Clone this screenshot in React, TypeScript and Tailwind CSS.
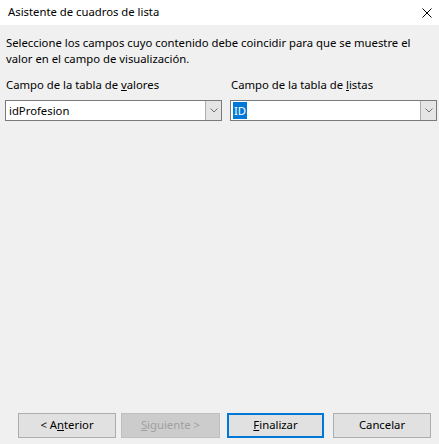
const font = "font-['Segoe_UI','Noto_Sans',sans-serif]";

function Combo({ value, selected, width }: { value: string; selected?: boolean; width: string }) {
  return (
    <div className={`flex h-[21px] ${width} border border-[#7a7a7a] bg-white`}>
      <div className="flex flex-1 items-center pl-[2px]">
        {selected ? (
          <span className="bg-[#0078d7] px-[1px] leading-[17px] text-white">{value}</span>
        ) : (
          <span className="pl-[1px] leading-[17px] text-black">{value}</span>
        )}
      </div>
      <div className="flex w-[16px] items-center justify-center border-l border-[#adadad] bg-[#e5e5e5]">
        <svg width="8" height="5" viewBox="0 0 8 5">
          <path d="M0.5 0.5 L4 4 L7.5 0.5" fill="none" stroke="#707070" strokeWidth="1" />
        </svg>
      </div>
    </div>
  );
}

function Btn({ children, disabled, focused, className = "" }: { children: React.ReactNode; disabled?: boolean; focused?: boolean; className?: string }) {
  const base = "flex h-[25px] items-center justify-center";
  if (disabled)
    return <div className={`${base} ${className} border border-[#bfbfbf] bg-[#cccccc] text-[#a0a0a0]`}>{children}</div>;
  if (focused)
    return <div className={`${base} ${className} border-2 border-[#0078d7] bg-[#e1e1e1] text-black`}>{children}</div>;
  return <div className={`${base} ${className} border border-[#adadad] bg-[#e1e1e1] text-black`}>{children}</div>;
}

export default function App() {
  return (
    <div className={`flex h-[444px] w-[439px] flex-col text-[11.3px] ${font}`}>
      <div className="flex h-[25px] items-center justify-between bg-white pl-[8px] pr-[6px]">
        <span className="text-black">Asistente de cuadros de lista</span>
        <svg width="10" height="10" viewBox="0 0 10 10" className="mr-[1px]">
          <path d="M0.5 0.5 L9.5 9.5 M9.5 0.5 L0.5 9.5" stroke="#000" strokeWidth="1" />
        </svg>
      </div>
      <div className="flex flex-1 flex-col bg-[#f0f0f0] pt-[10px]">
        <p className="pl-[6px] leading-[16px] text-black">
          Seleccione los campos cuyo contenido debe coincidir para que se muestre el
          <br />
          valor en el campo de visualización.
        </p>
        <div className="mt-[10px] flex pl-[5px]">
          <div className="flex w-[225px] flex-col">
            <span className="pl-[1px] leading-[16px]">
              Campo de la tabla de <span className="underline">v</span>alores
            </span>
            <div className="mt-[7px]">
              <Combo value="idProfesion" width="w-[217px]" />
            </div>
          </div>
          <div className="flex flex-col">
            <span className="pl-[1px] leading-[16px]">
              Campo de la tabla de <span className="underline">l</span>istas
            </span>
            <div className="mt-[7px]">
              <Combo value="ID" selected width="w-[207px]" />
            </div>
          </div>
        </div>
        <div className="flex-1" />
        <div className="mb-[6px] flex pl-[18px]">
          <Btn className="w-[98px]">
            &lt; A<span className="underline">n</span>terior
          </Btn>
          <Btn disabled className="ml-[5px] w-[99px]">
            <span className="underline">S</span>iguiente &gt;
          </Btn>
          <Btn focused className="ml-[7px] w-[97px]">
            <span className="underline">F</span>inalizar
          </Btn>
          <Btn className="ml-[9px] w-[98px]">Cancelar</Btn>
        </div>
      </div>
    </div>
  );
}
